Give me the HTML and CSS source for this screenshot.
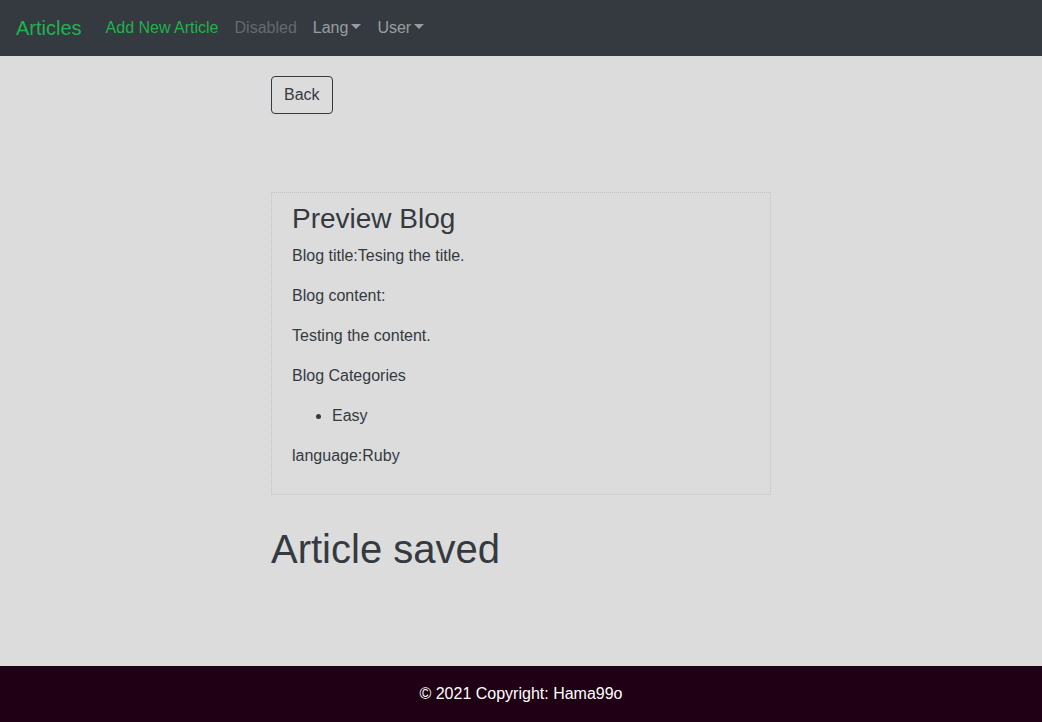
FILE: index.html
```html
<!DOCTYPE html>
<html lang="en">
<head>
<meta charset="utf-8">
<title>Articles</title>
<link rel="stylesheet" href="styles.css">
</head>
<body>
<nav class="navbar">
  <a class="brand" href="#">Articles</a>
  <ul class="nav">
    <li><a class="nav-link active" href="#">Add New Article</a></li>
    <li><a class="nav-link disabled" href="#">Disabled</a></li>
    <li><a class="nav-link dropdown" href="#">Lang</a></li>
    <li><a class="nav-link dropdown" href="#">User</a></li>
  </ul>
</nav>
<main class="main">
  <div class="content">
    <button class="btn" type="button">Back</button>
    <section class="card">
      <h3 class="card-title">Preview Blog</h3>
      <p>Blog title:Tesing the title.</p>
      <p>Blog content:</p>
      <p>Testing the content.</p>
      <p>Blog Categories</p>
      <ul class="cats">
        <li>Easy</li>
      </ul>
      <p>language:Ruby</p>
    </section>
    <h1 class="saved">Article saved</h1>
  </div>
</main>
<footer class="footer">© 2021 Copyright: Hama99o</footer>
</body>
</html>
```

FILE: styles.css
```css
* { box-sizing: border-box; }
html, body { margin: 0; padding: 0; }
body {
  font-family: "Liberation Sans", Arial, sans-serif;
  font-size: 16px;
  line-height: 1.5;
  color: #343a40;
  background: #dcdcdc;
  min-height: 100vh;
  display: flex;
  flex-direction: column;
}
.navbar {
  background: #343a40;
  height: 56px;
  padding: 8px 16px;
  display: flex;
  align-items: center;
}
.brand {
  color: #22b14c;
  font-size: 20px;
  line-height: 30px;
  text-decoration: none;
  margin-right: 16px;
  padding: 5px 0;
}
.nav {
  list-style: none;
  margin: 0;
  padding: 0;
  display: flex;
}
.nav-link {
  display: block;
  padding: 8px;
  text-decoration: none;
  color: rgba(255,255,255,.5);
}
.nav-link.active { color: #22b14c; }
.nav-link.disabled { color: rgba(255,255,255,.25); }
.nav-link.dropdown::after {
  content: "";
  display: inline-block;
  margin-left: 3px;
  vertical-align: 4px;
  border-top: 5px solid;
  border-right: 5px solid transparent;
  border-left: 5px solid transparent;
  border-bottom: 0;
}
.main { flex: 1; }
.content {
  width: 500px;
  margin: 0 auto;
  padding-top: 20px;
}
.btn {
  font-family: inherit;
  font-size: 16px;
  line-height: 24px;
  color: #343a40;
  background: transparent;
  border: 1px solid #343a40;
  border-radius: 4px;
  padding: 6px 12px;
  display: block;
}
.card {
  margin-top: 78px;
  border: 1px dotted #c4c4c4;
  padding: 9px 20px 10px;
}
.card-title {
  font-size: 28px;
  font-weight: 500;
  line-height: 1.2;
  margin: 0 0 8px;
}
.card p { margin: 0 0 16px; }
.cats {
  margin: 0 0 16px;
  padding-left: 40px;
}
.saved {
  font-size: 40px;
  font-weight: 500;
  line-height: 1.2;
  margin: 30px 0 8px;
}
.footer {
  background: #1f0014;
  color: #fff;
  height: 56px;
  display: flex;
  align-items: center;
  justify-content: center;
}
```
